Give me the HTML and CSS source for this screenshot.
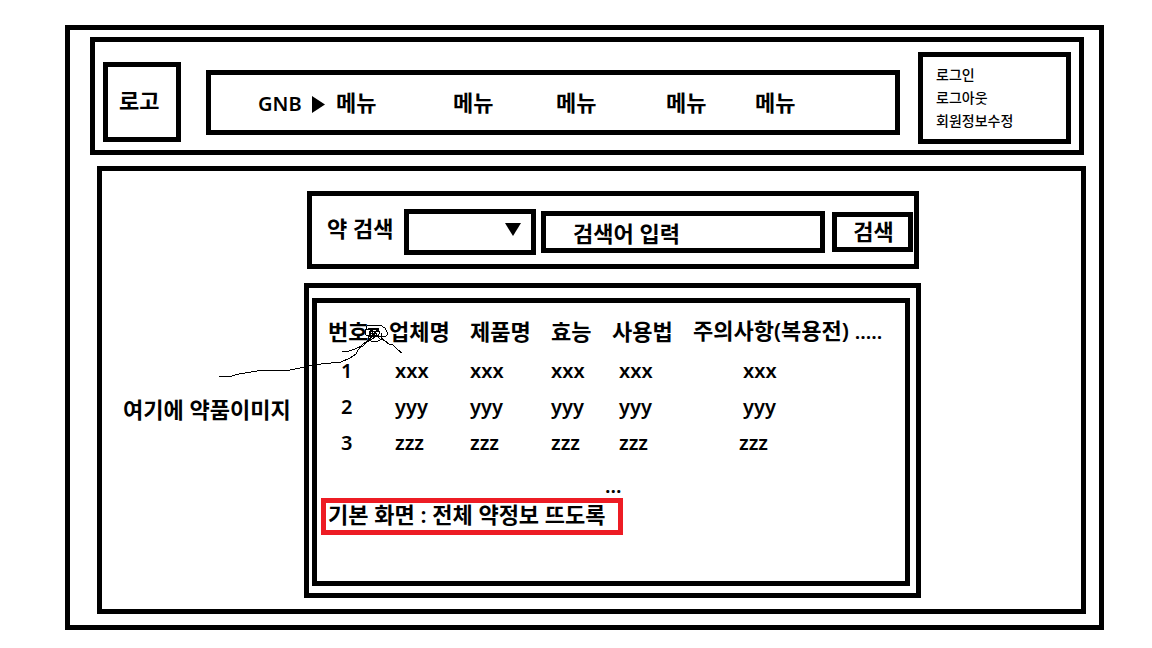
FILE: index.html
```html
<!DOCTYPE html>
<html lang="ko">
<head>
<meta charset="utf-8">
<meta name="viewport" content="width=device-width, initial-scale=1">
<title>약 검색</title>
<link rel="stylesheet" href="styles.css">
</head>
<body>
<div class="page box">
  <header class="header box">
    <div class="header-main">
      <a class="logo box" href="#">로고</a>
      <nav class="nav box" aria-label="GNB">
        <span class="nav-title latin">GNB
          <svg class="nav-arrow" viewBox="0 0 13 17" aria-hidden="true"><path d="M0 0L13 8.5L0 17Z"/></svg>
        </span>
        <a href="#">메뉴</a>
        <a href="#">메뉴</a>
        <a href="#">메뉴</a>
        <a href="#">메뉴</a>
        <a href="#">메뉴</a>
      </nav>
    </div>
    <div class="account box">
      <a href="#">로그인</a>
      <a href="#">로그아웃</a>
      <a href="#">회원정보수정</a>
    </div>
  </header>

  <main class="main box">
    <p class="image-caption">여기에 약품이미지</p>
    <div class="content">
      <form class="search box">
        <label class="search-label" for="field">약 검색</label>
        <div class="select-wrap">
          <select class="search-select box" id="field"><option></option></select>
          <svg class="select-arrow" viewBox="0 0 16 13" aria-hidden="true"><path d="M0 0H16L8 13Z"/></svg>
        </div>
        <input class="search-input box" type="text" placeholder="검색어 입력" aria-label="검색어 입력">
        <button class="search-button box" type="button">검색</button>
      </form>

      <section class="results box">
        <div class="results-inner box">
          <table class="table">
            <thead>
              <tr><th>번호</th><th>업체명</th><th>제품명</th><th>효능</th><th>사용법</th><th>주의사항(복용전) <span class="latin">.....</span></th></tr>
            </thead>
            <tbody>
              <tr><td>1</td><td>xxx</td><td>xxx</td><td>xxx</td><td>xxx</td><td>xxx</td></tr>
              <tr><td>2</td><td>yyy</td><td>yyy</td><td>yyy</td><td>yyy</td><td>yyy</td></tr>
              <tr><td>3</td><td>zzz</td><td>zzz</td><td>zzz</td><td>zzz</td><td>zzz</td></tr>
            </tbody>
          </table>
          <p class="more latin">...</p>
          <p class="note">기본 화면 : 전체 약정보 뜨도록</p>
        </div>
        <svg class="scribble" viewBox="219 322 186 58" aria-hidden="true">
          <path d="M219 376.500H230L239 374L251 372L263 370H290L300 368L309 366L321 364L341 362L350 358L356 354L358 350L362 345L372 337"/>
          <path d="M342 351H349L355 349L359 347L363 346L367 342L375 337"/>
          <path d="M381 338L385 341L389 344L393 345L398 350L402 353"/>
          <path d="M365 332L367 326L371 325H380L385 328L388 334L386 336H378L372 337L366 335Z"/>
          <path d="M366 329H376L380 332L378 336L370 335V330L376 332L373 336"/>
          <path d="M370 338L378 329M368 337L374 331L380 339M381 333L382 339L378 341H371L368 338L371 333H377"/>
          <path d="M368 328H378V331H369V333H375"/>
        </svg>
      </section>
    </div>
  </main>
</div>
</body>
</html>
```

FILE: styles.css
```css
* { box-sizing: border-box; }

body {
  margin: 0;
  padding: 25px 48px 18px 65px;
  background: #fff;
  color: #000;
  font-family: "Noto Sans", "Noto Sans CJK KR", sans-serif;
  font-size: 22px;
  font-weight: 600;
  line-height: 24px;
}

p { margin: 0; }
a { color: inherit; text-decoration: none; }

.box { border: 5px solid #000; }
.latin { font-size: 20px; }

.page { padding: 7px 13px 11px 20px; }

/* Header */
.header {
  display: flex;
  gap: 18px;
  margin-right: 2px;
  padding: 10px 8px 6px;
}
.header-main {
  display: flex;
  flex: 1;
  align-items: center;
  gap: 25px;
  padding-top: 8px;
}
.logo {
  width: 78px;
  height: 80px;
  padding: 21px 11px;
}
.nav {
  display: grid;
  flex: 1;
  grid-template-columns: 78px 117fr 103fr 110fr 89fr 140fr;
  align-items: center;
  height: 65px;
  padding-left: 47px;
}
.nav-title {
  display: flex;
  align-items: center;
  gap: 10px;
  padding-top: 4px;
}
.nav-arrow { width: 13px; height: 17px; }
.account {
  display: flex;
  flex-direction: column;
  width: 153px;
  padding: 6px 13px 7px;
  font-size: 14px;
  line-height: 23px;
  font-weight: 500;
}

/* Main area */
.main {
  display: grid;
  grid-template-columns: minmax(0, 202fr) minmax(0, 617fr) minmax(0, 160fr);
  margin: 11px 0 0 7px;
  padding: 20px 0 11px;
}
.image-caption {
  align-self: center;
  padding: 28px 0 0 21px;
  white-space: nowrap;
}
.content {
  display: flex;
  flex-direction: column;
  gap: 14px;
}

/* Search bar */
.search {
  display: flex;
  align-items: center;
  margin: 0 2px 0 3px;
  padding: 13px 1px 9px 15px;
}
.search-label {
  width: 77px;
  padding-bottom: 8px;
}
.select-wrap {
  position: relative;
  width: 132px;
  margin-right: 5px;
}
.search-select,
.search-input,
.search-button {
  display: block;
  border-radius: 0;
  background: #fff;
  color: #000;
  font: inherit;
  appearance: none;
}
.search-select { width: 100%; height: 46px; }
.select-arrow {
  position: absolute;
  top: 14px;
  right: 15px;
  width: 16px;
  height: 13px;
  pointer-events: none;
}
.search-input {
  flex: 1;
  min-width: 0;
  height: 42px;
  margin-right: 7px;
  padding: 2px 27px 0;
}
.search-input::placeholder { color: #000; opacity: 1; }
.search-button {
  width: 81px;
  height: 40px;
  padding: 0 0 2px 2px;
}

/* Results */
.results {
  position: relative;
  padding: 10px 6px 7px 3px;
}
.results-inner {
  min-height: 288px;
  padding: 7px 4px;
}
.table {
  width: 100%;
  table-layout: fixed;
  border-collapse: collapse;
  text-align: left;
}
.table th,
.table td {
  height: 36px;
  padding: 0;
  font-weight: 600;
  white-space: nowrap;
}
.table th { height: 42px; }
.table td {
  padding-top: 1px;
  font-size: 20px;
}
.table th:nth-child(1) { width: 68px; padding-left: 7px; }
.table th:nth-child(2) { width: 81px; }
.table th:nth-child(3) { width: 81px; }
.table th:nth-child(4) { width: 61px; }
.table th:nth-child(5) { width: 81px; }
.table td:nth-child(1) { padding-left: 20px; }
.table td:nth-child(2) { padding-left: 6px; }
.table td:nth-child(5) { padding-left: 7px; }
.table td:nth-child(6) { padding-left: 50px; }
.table tr:last-child td:nth-child(6) { padding-left: 46px; }
.more { padding: 14px 0 0 284px; }
.note {
  width: fit-content;
  padding: 0 12px 5px 2px;
  border: 5px solid #ed1c24;
  line-height: 22px;
}

/* Freehand pointer drawn across the panel edge */
.scribble {
  position: absolute;
  top: 34px;
  left: -90px;
  width: 186px;
  height: 58px;
  fill: none;
  stroke: #000;
  stroke-width: 1;
  shape-rendering: crispEdges;
  pointer-events: none;
}
```
